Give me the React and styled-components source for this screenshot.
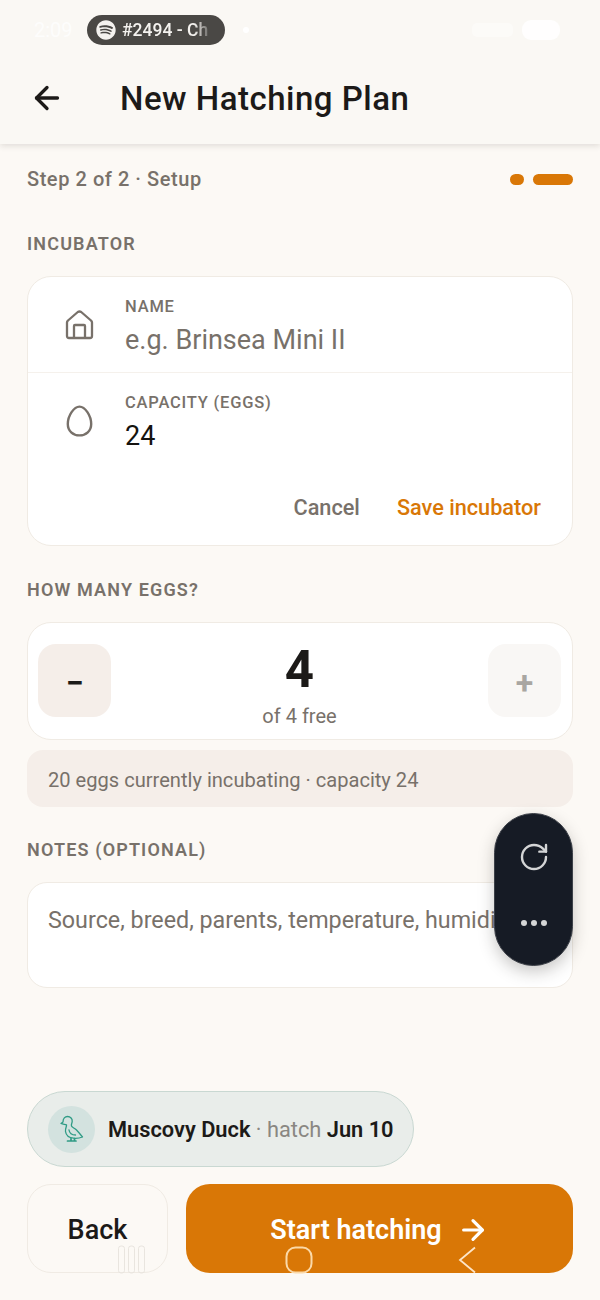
import React from "react";
import styled, { createGlobalStyle } from "styled-components";
import { ArrowLeft, ArrowRight, RotateCw } from "lucide-react";
import { FaSpotify } from "react-icons/fa";

const GlobalStyle = createGlobalStyle`
  html, body {
    margin: 0;
    padding: 0;
    background: #fcf9f5;
  }
  * {
    box-sizing: border-box;
  }
`;

const Page = styled.div`
  position: relative;
  width: 600px;
  height: 1300px;
  overflow: hidden;
  display: flex;
  flex-direction: column;
  background: #fcf9f5;
  color: #1c1a18;
  font-family: Roboto, "Liberation Sans", sans-serif;
`;

const Header = styled.header`
  height: 144px;
  flex: none;
  background: #faf8f4;
  box-shadow: 0 2px 6px rgba(60, 50, 40, 0.14);
  display: flex;
  flex-direction: column;
`;

const StatusBar = styled.div`
  height: 60px;
  padding: 15px 40px 0 34px;
  display: flex;
  align-items: flex-start;
`;

const Clock = styled.span`
  width: 53px;
  line-height: 30px;
  font-size: 20px;
  color: rgba(255, 255, 255, 0.75);
`;

const MediaPill = styled.div`
  width: 138px;
  height: 30px;
  border-radius: 15px;
  background: #4a4845;
  color: #f4f2ef;
  display: flex;
  align-items: center;
  gap: 6px;
  padding-left: 9px;
  font-size: 17.5px;
  font-weight: 500;
`;

const MediaText = styled.span`
  white-space: nowrap;
  -webkit-mask-image: linear-gradient(to right, #000 84%, rgba(0, 0, 0, 0.25) 100%);
  mask-image: linear-gradient(to right, #000 84%, rgba(0, 0, 0, 0.25) 100%);
`;

const StatusDot = styled.i`
  width: 6px;
  height: 6px;
  margin: 12px 0 0 18px;
  border-radius: 50%;
  background: #fff;
`;

const BatteryGroup = styled.div`
  margin-left: auto;
  display: flex;
  align-items: center;
  gap: 9px;
  height: 30px;
`;

const SignalBlob = styled.i`
  width: 41px;
  height: 14px;
  border-radius: 5px;
  background: rgba(255, 255, 255, 0.4);
`;

const BatteryBlob = styled.i`
  width: 38px;
  height: 20px;
  border-radius: 9px;
  background: rgba(255, 255, 255, 0.85);
`;

const TitleRow = styled.div`
  display: flex;
  align-items: center;
  height: 76px;
  padding: 0 0 0 29px;
`;

const BackIcon = styled(ArrowLeft)`
  width: 36px;
  height: 36px;
  margin-right: 55px;
  color: #1c1a18;
`;

const Title = styled.h1`
  margin: 0;
  font-size: 33px;
  font-weight: 500;
  letter-spacing: 0.5px;
  color: #1c1a18;
`;

const Content = styled.main`
  flex: 1;
  display: flex;
  flex-direction: column;
  padding: 0 27px;
`;

const StepRow = styled.div`
  display: flex;
  align-items: center;
  justify-content: space-between;
  height: 24px;
  margin-top: 23px;
`;

const StepText = styled.span`
  font-size: 20px;
  font-weight: 500;
  letter-spacing: 0.55px;
  color: #78716a;
`;

const StepDots = styled.div`
  display: flex;
  gap: 9px;
`;

const StepDot = styled.i`
  height: 11px;
  width: ${(p) => (p.$wide ? "40px" : "14px")};
  border-radius: 6px;
  background: #d97706;
`;

const SectionLabel = styled.div`
  font-size: 18px;
  font-weight: 600;
  letter-spacing: 1.15px;
  line-height: 20px;
  color: #78716a;
  margin-top: ${(p) => p.$top}px;
  margin-bottom: ${(p) => p.$bottom}px;
`;

const Card = styled.section`
  background: #fff;
  border: 1.5px solid #f0ebe4;
  border-radius: 24px;
`;

const FieldRow = styled.div`
  height: 96px;
  display: flex;
  align-items: center;
  padding-left: 33px;
  box-shadow: ${(p) => (p.$divided ? "0 -1px 0 #f5f1ec" : "none")};
`;

const FieldIcon = styled.div`
  width: 36px;
  margin-right: 28px;
  display: flex;
  justify-content: center;
  color: #78716a;
`;

const FieldBody = styled.div`
  display: flex;
  flex-direction: column;
  gap: 8px;
  padding-top: 3px;
`;

const FieldLabel = styled.label`
  font-size: 16.5px;
  font-weight: 500;
  letter-spacing: 0.8px;
  line-height: 18px;
  color: #78716a;
`;

const FieldValue = styled.div`
  font-size: 27px;
  line-height: 32px;
  color: ${(p) => (p.$placeholder ? "#78716a" : "#15130f")};
`;

const CardActions = styled.div`
  height: 76px;
  padding: 0 31px 0 0;
  display: flex;
  justify-content: flex-end;
  align-items: center;
  gap: 37px;
`;

const TextButton = styled.span`
  font-size: 21.7px;
  font-weight: 500;
  color: ${(p) => (p.$primary ? "#d97706" : "#78716a")};
`;

const Stepper = styled(Card)`
  height: 118px;
  display: flex;
  align-items: center;
  justify-content: space-between;
  padding: 0 11px 2px 10px;
`;

const StepButton = styled.div`
  width: 73px;
  height: 73px;
  padding-top: 5px;
  border-radius: 18px;
  display: flex;
  align-items: center;
  justify-content: center;
  font-size: 32px;
  font-weight: 700;
  background: ${(p) => (p.$disabled ? "#f9f7f5" : "#f5eee9")};
  color: ${(p) => (p.$disabled ? "#a9a6a2" : "#1c1a18")};
`;

const Count = styled.div`
  display: flex;
  flex-direction: column;
  align-items: center;
  gap: 7px;
  padding-top: 12px;
`;

const CountValue = styled.div`
  font-size: 51px;
  font-weight: 700;
  line-height: 52px;
  color: #1c1a18;
`;

const CountHint = styled.div`
  font-size: 20px;
  line-height: 26px;
  color: #78716a;
`;

const InfoBox = styled.div`
  height: 57px;
  margin-top: 10px;
  padding: 2px 0 0 21px;
  display: flex;
  align-items: center;
  border-radius: 16px;
  background: #f5eee9;
  font-size: 20.1px;
  color: #78716a;
`;

const NotesBox = styled(Card)`
  height: 106px;
  padding: 23px 20px;
  font-size: 23.3px;
  line-height: 28px;
  white-space: nowrap;
  color: #78716a;
  border-radius: 20px;
`;

const Summary = styled.div`
  margin-top: auto;
  width: 387px;
  height: 76px;
  display: flex;
  align-items: center;
  gap: 13px;
  padding-left: 20px;
  border-radius: 38px;
  background: #e9edea;
  border: 1.5px solid #c9d8d2;
  font-size: 21.8px;
  font-weight: 600;
  color: #1c1a18;
  white-space: nowrap;
`;

const DuckBadge = styled.div`
  width: 47px;
  height: 47px;
  border-radius: 50%;
  background: #d3e2df;
  display: flex;
  align-items: center;
  justify-content: center;
  flex: none;
`;

const Muted = styled.span`
  font-weight: 400;
  color: #8a8782;
`;

const Footer = styled.div`
  display: flex;
  gap: 18px;
  height: 89px;
  margin: 17px 0 27px;
`;

const BackButton = styled.div`
  width: 141px;
  border: 1.5px solid #f0ebe4;
  border-radius: 24px;
  display: flex;
  align-items: center;
  justify-content: center;
  padding-top: 2px;
  font-size: 27px;
  font-weight: 500;
  color: #1c1a18;
`;

const StartButton = styled.div`
  flex: 1;
  border-radius: 24px;
  background: #d97706;
  display: flex;
  align-items: center;
  justify-content: center;
  gap: 15px;
  padding-top: 2px;
  font-size: 27px;
  font-weight: 600;
  color: #fff;
`;

const FloatingPill = styled.div`
  position: absolute;
  left: 494px;
  top: 813px;
  width: 79px;
  height: 153px;
  border-radius: 40px;
  background: #161b25;
  border: 1.5px solid #3c4048;
  box-shadow: 0 6px 16px rgba(40, 36, 30, 0.25);
  display: flex;
  flex-direction: column;
  align-items: center;
  padding-top: 27px;
  color: #d4d5d6;
`;

const PillDots = styled.div`
  display: flex;
  gap: 4px;
  margin-top: 47px;
`;

const PillDot = styled.i`
  width: 6px;
  height: 6px;
  border-radius: 50%;
  background: #d4d5d6;
`;

const NavGlyph = styled.svg`
  position: absolute;
  left: ${(p) => p.$left}px;
  top: ${(p) => p.$top}px;
  fill: none;
  stroke: ${(p) => p.$stroke};
  stroke-width: ${(p) => p.$weight};
`;

const HouseIcon = () => (
  <svg width="29" height="30" viewBox="0 0 29 30" fill="none" stroke="currentColor" strokeWidth="2.3" strokeLinejoin="round">
    <path d="M2 26 V12.5 Q2 11.5 3 10.5 L12.8 2 Q14.5 1 16.2 2 L26 10.5 Q27 11.5 27 12.5 V26 Q27 28 25 28 H4 Q2 28 2 26 Z" />
    <path d="M9 28 V16 Q9 15 10 15 H19 Q20 15 20 16 V28" />
  </svg>
);

const EggIcon = () => (
  <svg width="27" height="32" viewBox="0 0 27 32" fill="none" stroke="currentColor" strokeWidth="2.4">
    <path d="M13.5 1.6 C19 1.6 25.2 10.5 25.2 19 C25.2 26 20 30.4 13.5 30.4 C7 30.4 1.8 26 1.8 19 C1.8 10.5 8 1.6 13.5 1.6 Z" />
  </svg>
);

const DuckIcon = () => (
  <svg width="24" height="28" viewBox="0 0 24 28" fill="none" stroke="#2f9b85" strokeWidth="1.3" strokeLinejoin="round" strokeLinecap="round">
    <path d="M1 8.5 L3 7 C3 3.5 5 1.5 7.5 1.5 C10.5 1.5 12.5 3.8 12.2 6.5 C12 8.5 11 9.5 11.5 11 C12 12.5 14.5 13 16.5 15 C18.5 17 20.5 19.5 22.5 22 C20 23 17 23.5 13.5 23.2 C9 22.8 6 20 5.5 16.5 C5.1 13.5 6.8 11.5 6.5 9.8 C5 9.3 3 9.2 1 8.5 Z" />
    <path d="M9 15 C9.5 18 12 20 15.5 20" />
    <path d="M11 23.5 V25.5 M14.5 23.5 V25.5 M7.5 26 H16" strokeWidth="1.7" />
  </svg>
);

export default function App() {
  return (
    <Page>
      <GlobalStyle />
      <Header>
        <StatusBar>
          <Clock>2:09</Clock>
          <MediaPill>
            <FaSpotify size={20} />
            <MediaText>#2494 - Ch</MediaText>
          </MediaPill>
          <StatusDot />
          <BatteryGroup>
            <SignalBlob />
            <BatteryBlob />
          </BatteryGroup>
        </StatusBar>
        <TitleRow>
          <BackIcon strokeWidth={2.2} />
          <Title>New Hatching Plan</Title>
        </TitleRow>
      </Header>

      <Content>
        <StepRow>
          <StepText>Step 2 of 2 · Setup</StepText>
          <StepDots>
            <StepDot />
            <StepDot $wide />
          </StepDots>
        </StepRow>

        <SectionLabel $top={43} $bottom={22}>INCUBATOR</SectionLabel>
        <Card>
          <FieldRow>
            <FieldIcon>
              <HouseIcon />
            </FieldIcon>
            <FieldBody>
              <FieldLabel>NAME</FieldLabel>
              <FieldValue $placeholder>e.g. Brinsea Mini II</FieldValue>
            </FieldBody>
          </FieldRow>
          <FieldRow $divided>
            <FieldIcon>
              <EggIcon />
            </FieldIcon>
            <FieldBody>
              <FieldLabel>CAPACITY (EGGS)</FieldLabel>
              <FieldValue>24</FieldValue>
            </FieldBody>
          </FieldRow>
          <CardActions>
            <TextButton>Cancel</TextButton>
            <TextButton $primary>Save incubator</TextButton>
          </CardActions>
        </Card>

        <SectionLabel $top={34} $bottom={22}>HOW MANY EGGS?</SectionLabel>
        <Stepper>
          <StepButton>−</StepButton>
          <Count>
            <CountValue>4</CountValue>
            <CountHint>of 4 free</CountHint>
          </Count>
          <StepButton $disabled>+</StepButton>
        </Stepper>
        <InfoBox>20 eggs currently incubating · capacity 24</InfoBox>

        <SectionLabel $top={33} $bottom={22}>NOTES (OPTIONAL)</SectionLabel>
        <NotesBox>Source, breed, parents, temperature, humidi</NotesBox>

        <Summary>
          <DuckBadge>
            <DuckIcon />
          </DuckBadge>
          <span>
            Muscovy Duck <Muted>· hatch</Muted> Jun 10
          </span>
        </Summary>
        <Footer>
          <BackButton>Back</BackButton>
          <StartButton>
            Start hatching
            <ArrowRight size={32} strokeWidth={2.4} />
          </StartButton>
        </Footer>
      </Content>

      <FloatingPill>
        <RotateCw size={32} strokeWidth={1.8} />
        <PillDots>
          <PillDot />
          <PillDot />
          <PillDot />
        </PillDots>
      </FloatingPill>

      <NavGlyph $left={117} $top={1245} $stroke="#e9e5df" $weight={1} width="29" height="29" viewBox="0 0 29 29">
        <rect x="1.5" y="1" width="6" height="27" rx="2.5" />
        <rect x="11.5" y="1" width="6" height="27" rx="2.5" />
        <rect x="21.5" y="1" width="6" height="27" rx="2.5" />
      </NavGlyph>
      <NavGlyph $left={285} $top={1246} $stroke="#fbd9a8" $weight={2} width="28" height="28" viewBox="0 0 28 28">
        <rect x="1.5" y="1.5" width="25" height="25" rx="9" />
      </NavGlyph>
      <NavGlyph $left={458} $top={1246} $stroke="#fde5c8" $weight={1.8} width="19" height="28" viewBox="0 0 19 28">
        <path d="M17 1.5 L2 14 L17 26.5" />
      </NavGlyph>
    </Page>
  );
}
